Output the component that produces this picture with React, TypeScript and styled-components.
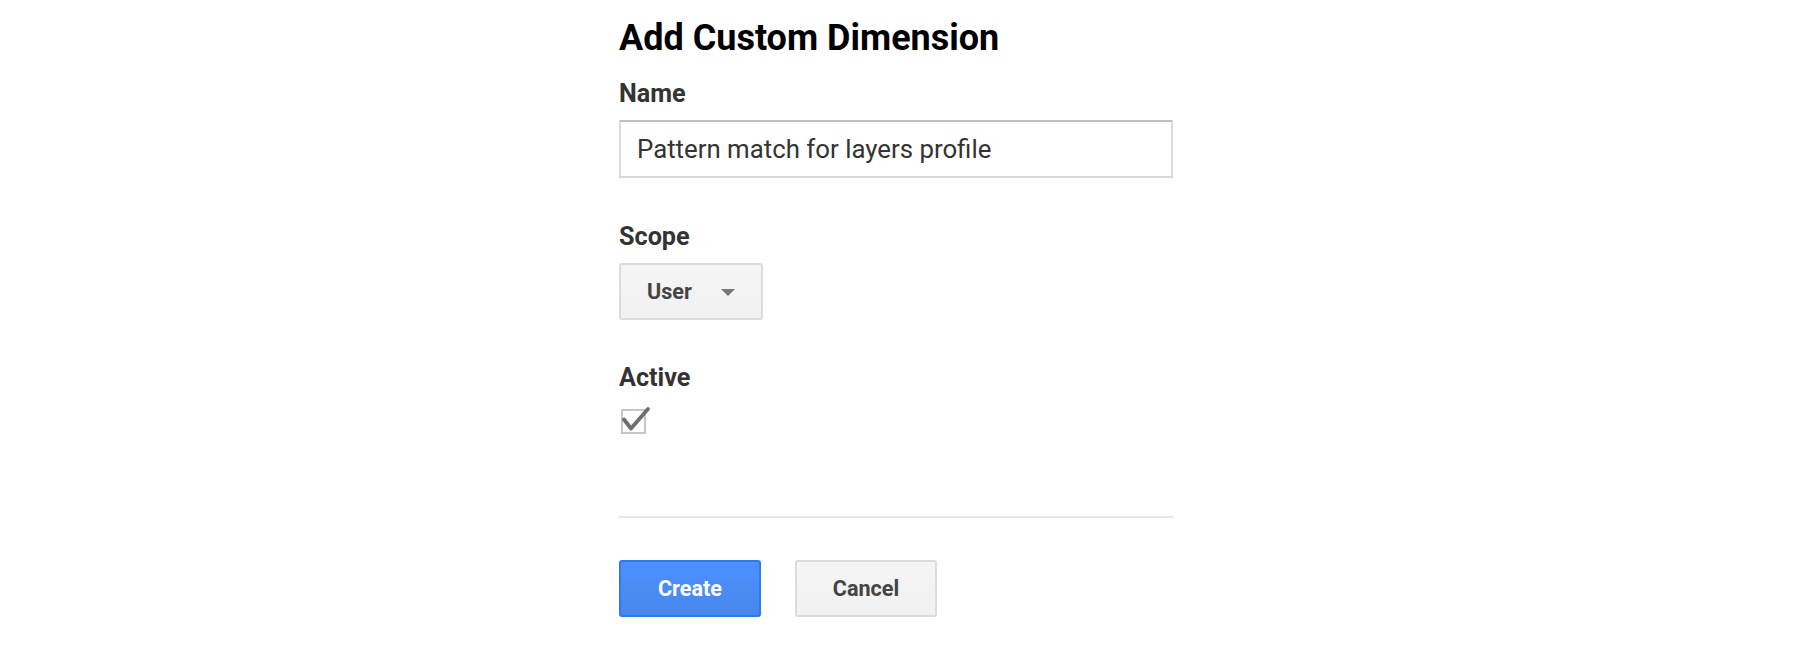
import React from "react";
import styled, { createGlobalStyle } from "styled-components";

const GlobalStyle = createGlobalStyle`
  html, body {
    margin: 0;
    padding: 0;
    background: #ffffff;
  }
  body {
    font-family: Roboto, "Liberation Sans", Arial, sans-serif;
  }
`;

const Page = styled.div`
  padding: 16px 0 40px 619px;
  width: 554px;
  display: flex;
  flex-direction: column;
`;

const Title = styled.h1`
  margin: 0 0 19px 0;
  font-size: 36px;
  line-height: 44px;
  font-weight: 700;
  color: #000;
  white-space: nowrap;
`;

const Fields = styled.div`
  display: flex;
  flex-direction: column;
  gap: 43.5px;
`;

const Field = styled.div`
  display: flex;
  flex-direction: column;
  align-items: flex-start;
`;

const Label = styled.label<{ $gap?: number }>`
  font-size: 25.2px;
  line-height: 30px;
  font-weight: 700;
  color: #333;
  margin-bottom: ${(p) => p.$gap ?? 11}px;
`;

const TextInput = styled.input`
  box-sizing: border-box;
  width: 554px;
  height: 58px;
  margin: 0;
  padding: 0 16px;
  border: 2px solid #d9d9d9;
  border-top-color: #c0c0c0;
  border-radius: 0;
  background: #fff;
  font-family: Roboto, "Liberation Sans", Arial, sans-serif;
  font-size: 25.8px;
  color: #333;
  outline: none;
`;

const Button = styled.button<{ $primary?: boolean }>`
  box-sizing: border-box;
  height: 57px;
  min-width: 142px;
  margin: 0;
  padding: 0 26px;
  display: inline-flex;
  align-items: center;
  justify-content: center;
  gap: 29px;
  border-radius: 3px;
  font-family: Roboto, "Liberation Sans", Arial, sans-serif;
  font-size: 21.6px;
  font-weight: 700;
  cursor: pointer;
  border: 2px solid ${(p) => (p.$primary ? "#3079ed" : "#dcdcdc")};
  color: ${(p) => (p.$primary ? "#fff" : "#444")};
  background: ${(p) =>
    p.$primary
      ? "linear-gradient(#4d90fe, #4787ed)"
      : "linear-gradient(#f5f5f5, #f1f1f1)"};
`;

const Caret = styled.span`
  width: 0;
  height: 0;
  border-left: 7px solid transparent;
  border-right: 7px solid transparent;
  border-top: 7px solid #777;
  margin-top: 3px;
`;

const CheckBox = styled.svg`
  display: block;
`;

const Divider = styled.hr`
  margin: 81px 0 0 0;
  width: 554px;
  height: 2px;
  border: 0;
  background: #e5e5e5;
`;

const Actions = styled.div`
  margin-top: 42px;
  display: flex;
  gap: 34px;
`;

export default function App() {
  return (
    <>
      <GlobalStyle />
      <Page>
        <Title>Add Custom Dimension</Title>
        <Fields>
          <Field>
            <Label>Name</Label>
            <TextInput readOnly value="Pattern match for layers profile" />
          </Field>
          <Field>
            <Label>Scope</Label>
            <Button type="button">
              <span>User</span>
              <Caret />
            </Button>
          </Field>
          <Field>
            <Label $gap={11}>Active</Label>
            <CheckBox width="33" height="31" viewBox="0 0 33 31">
              <rect x="3" y="6" width="23" height="23" fill="#fff" stroke="#c6c6c6" strokeWidth="2" />
              <path
                d="M5 15.5 L12 24.5 L29 5"
                fill="none"
                stroke="#6e6e6e"
                strokeWidth="3.8"
                strokeLinecap="round"
                strokeLinejoin="round"
              />
            </CheckBox>
          </Field>
        </Fields>
        <Divider />
        <Actions>
          <Button type="button" $primary>
            Create
          </Button>
          <Button type="button">Cancel</Button>
        </Actions>
      </Page>
    </>
  );
}
